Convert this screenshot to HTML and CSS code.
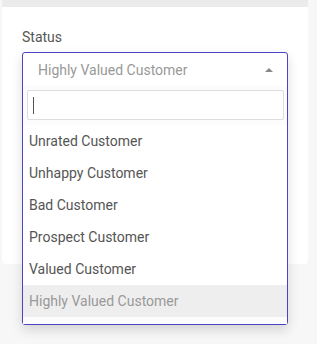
FILE: index.html
```html
<!DOCTYPE html>
<html lang="en">

<head>
    <meta charset="UTF-8">
    <title>Status</title>
    <link rel="stylesheet" href="styles.css">
</head>

<body>
    <div class="panel-top"></div>
    <div class="card">
        <div class="field-label">Status</div>
        <div class="select open">
            <div class="select-head">
                <span class="select-value">Highly Valued Customer</span>
                <span class="select-arrow"></span>
            </div>
            <div class="select-drop">
                <div class="search-box"><span class="caret"></span></div>
                <ul class="options">
                    <li>Unrated Customer</li>
                    <li>Unhappy Customer</li>
                    <li>Bad Customer</li>
                    <li>Prospect Customer</li>
                    <li>Valued Customer</li>
                    <li class="selected">Highly Valued Customer</li>
                </ul>
            </div>
        </div>
    </div>
</body>

</html>
```
FILE: styles.css
```css
html,
body {
    height: 100%;
}

body {
    margin: 0;
    background-color: #f7f7f7;
    font-family: Roboto, "Liberation Sans", sans-serif;
    font-size: 14px;
}

.panel-top {
    margin-left: 2px;
    width: 306px;
    height: 7px;
    background-color: #ebebeb;
}

.card {
    position: relative;
    margin-left: 2px;
    width: 306px;
    height: 257px;
    box-sizing: border-box;
    padding: 22px 0 0 20px;
    background-color: #fff;
    border-radius: 0 0 4px 4px;
}

.field-label {
    color: #555;
    line-height: 17px;
    margin-bottom: 6px;
}

/* open dropdown floats over the card edge */
.select {
    position: relative;
    z-index: 2;
    width: 266px;
    box-sizing: border-box;
    border: 1px solid #4a44c4;
    border-radius: 3px;
    background-color: #fff;
    box-shadow: 0 5px 12px rgba(0, 0, 0, 0.14);
}

.select-head {
    display: flex;
    align-items: center;
    justify-content: space-between;
    height: 33px;
    padding: 0 14px 0 15px;
}

.select-value {
    color: #999;
}

.select-arrow {
    width: 0;
    height: 0;
    border-left: 4px solid transparent;
    border-right: 4px solid transparent;
    border-bottom: 4px solid #888;
}

.select-drop {
    padding: 4px 3px 7px 0;
    background-color: #fcfcfc;
}

.search-box {
    display: flex;
    align-items: center;
    height: 30px;
    box-sizing: border-box;
    margin-left: 4px;
    padding-left: 5px;
    border: 1px solid #ddd;
    border-radius: 2px;
    background-color: #fff;
}

.caret {
    width: 1px;
    height: 17px;
    background-color: #555;
}

.options {
    list-style: none;
    margin: 5px -3px 0 0;
    padding: 0;
    background-color: #fff;
}

.options li {
    height: 32px;
    line-height: 32px;
    padding-left: 6px;
    color: #555;
}

.options li.selected {
    background-color: #eee;
    color: #999;
}
```
